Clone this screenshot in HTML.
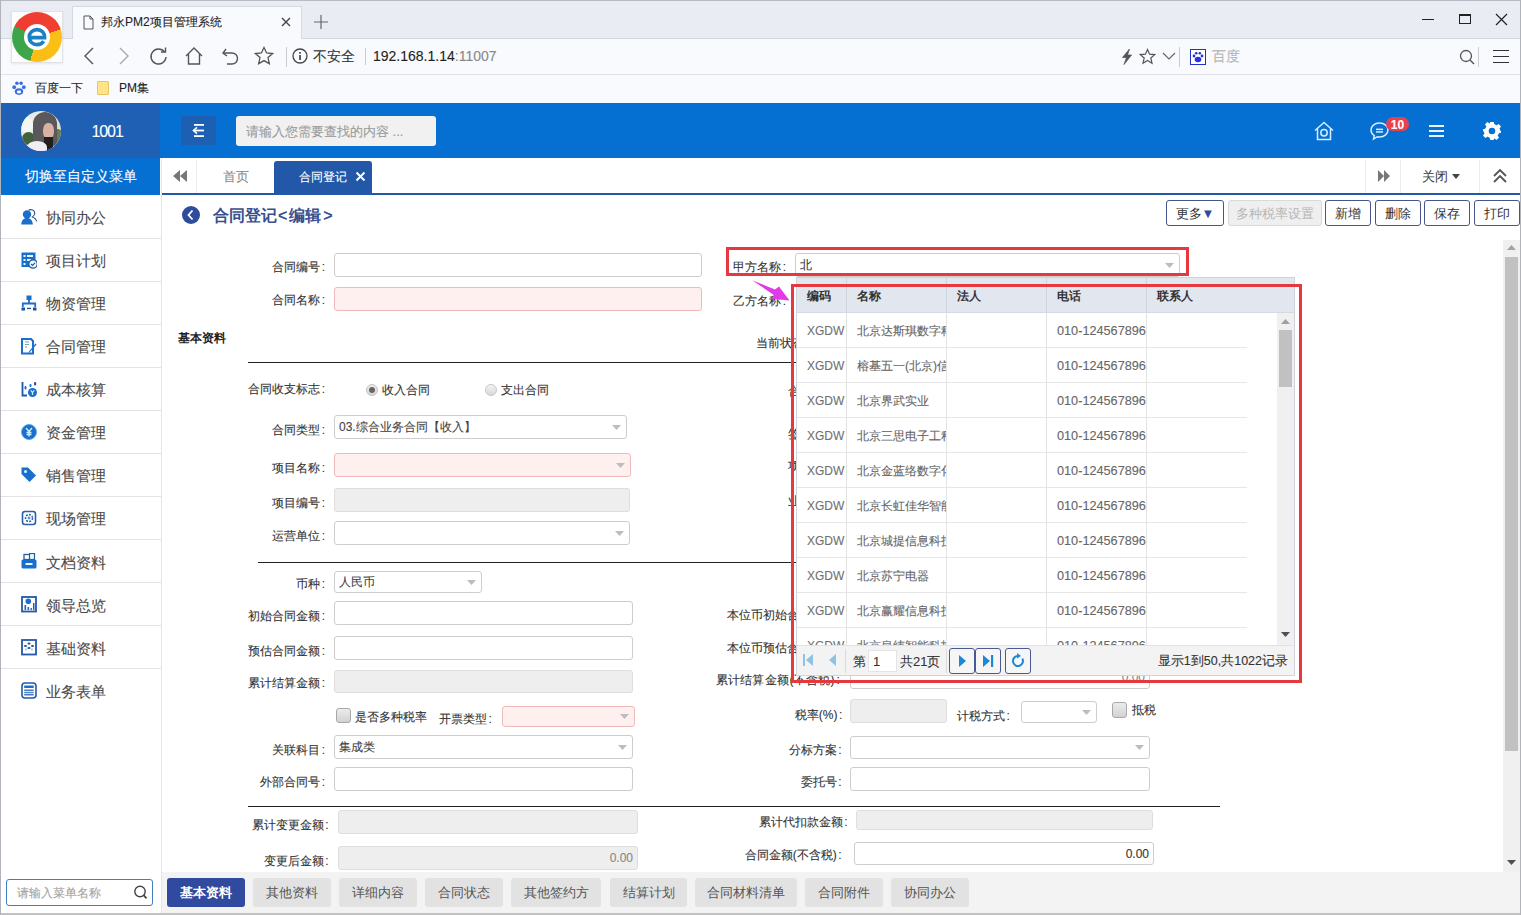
<!DOCTYPE html>
<html><head><meta charset="utf-8">
<style>
*{box-sizing:border-box;margin:0;padding:0}
html,body{width:1521px;height:915px;overflow:hidden;background:#fff;font-family:"Liberation Sans",sans-serif;font-size:12px;color:#333}
.a{position:absolute}
.t{position:absolute;white-space:nowrap;line-height:1;-webkit-text-stroke:0.1px currentColor}
.in{position:absolute;border:1px solid #cdcdcd;border-radius:3px;background:#fff}
.pk{background:#fff0f0;border-color:#f3b9b9}
.gr{background:#eeeeee;border-color:#dedede}
.btn{position:absolute;border:1px solid #46568c;border-radius:3px;background:#fff;font-size:13px;color:#333;text-align:center;line-height:26px}
.tab{position:absolute;top:878px;height:29px;border-radius:3px;background:#e2e2e2;color:#555;font-size:13px;text-align:center;line-height:29px}
</style></head><body>

<div class="a" style="left:0px;top:0px;width:1521px;height:1px;background:#b7bac2"></div>
<div class="a" style="left:1px;top:1px;width:1519px;height:37px;background:#e9ecf3"></div>
<div class="a" style="left:1px;top:38px;width:1519px;height:1px;background:#d3d6dd"></div>
<div class="a" style="left:1px;top:39px;width:1519px;height:35px;background:#f9fafd"></div>
<div class="a" style="left:1px;top:74px;width:1519px;height:1px;background:#e1e3e8"></div>
<div class="a" style="left:1px;top:75px;width:1519px;height:28px;background:#f9fafd"></div>
<div class="a" style="left:72px;top:6px;width:230px;height:33px;background:#f9fafd;border:1px solid #d6d9e0;border-bottom:none"></div>
<div class="a" style="left:11px;top:11px;width:52px;height:52px;background:#fdfdfd;border:1px solid #e2e2e6;box-shadow:0 1px 2px rgba(0,0,0,.08)"></div>
<div class="a" style="left:12px;top:12px;width:50px;height:50px;border-radius:50%;background:conic-gradient(from 0deg,#ef3e31 0deg,#f0412f 72deg,#fbc116 72deg,#f9bd15 196deg,#40a64a 196deg,#3aa448 296deg,#ef3e31 296deg)"></div>
<div class="a" style="left:24px;top:24px;width:26px;height:26px;border-radius:50%;background:#fff"></div>
<svg class="a" style="left:24px;top:24px;" width="26" height="26" viewBox="0 0 26 26"><path d="M5.3 13.6 H20.6 C20.8 8.8 17.6 5.6 13 5.6 C8.6 5.6 5.2 8.9 5.2 13.1 C5.2 17.5 8.6 20.6 13 20.6 C15.8 20.6 18.2 19.4 19.7 17.2" fill="none" stroke="#1b80c6" stroke-width="3.6"/></svg>
<svg class="a" style="left:83px;top:15px;" width="11" height="15" viewBox="0 0 11 15"><path d="M1 1 H7 L10 4 V14 H1 Z M7 1 V4 H10" fill="none" stroke="#555" stroke-width="1"/></svg>
<div class="t" style="left:101px;top:16.4px;font-size:12px;color:#222;">邦永PM2项目管理系统</div>
<svg class="a" style="left:281px;top:17px;" width="10" height="10" viewBox="0 0 10 10"><path d="M1 1 L9 9 M9 1 L1 9" stroke="#444" stroke-width="1.4"/></svg>
<svg class="a" style="left:314px;top:15px;" width="14" height="14" viewBox="0 0 14 14"><path d="M7 0 V14 M0 7 H14" stroke="#666" stroke-width="1.2"/></svg>
<div class="a" style="left:1422px;top:19px;width:12px;height:1px;background:#222"></div>
<div class="a" style="left:1459px;top:14px;width:12px;height:10px;border:1px solid #222;border-top-width:2px"></div>
<svg class="a" style="left:1495px;top:13px;" width="13" height="13" viewBox="0 0 13 13"><path d="M1 1 L12 12 M12 1 L1 12" stroke="#222" stroke-width="1.2"/></svg>
<svg class="a" style="left:82px;top:47px;" width="14" height="18" viewBox="0 0 14 18"><path d="M11 1 L3 9 L11 17" fill="none" stroke="#555" stroke-width="1.4"/></svg>
<svg class="a" style="left:117px;top:47px;" width="14" height="18" viewBox="0 0 14 18"><path d="M3 1 L11 9 L3 17" fill="none" stroke="#aaa" stroke-width="1.4"/></svg>
<svg class="a" style="left:149px;top:46px;" width="20" height="20" viewBox="0 0 20 20"><path d="M15.5 6 A7.5 7.5 0 1 0 17 11" fill="none" stroke="#555" stroke-width="1.4"/><path d="M12 6 H16.5 V1.5" fill="none" stroke="#555" stroke-width="1.4"/></svg>
<svg class="a" style="left:184px;top:46px;" width="20" height="20" viewBox="0 0 20 20"><path d="M2 10 L10 2 L18 10 M4.5 8 V18 H15.5 V8" fill="none" stroke="#555" stroke-width="1.4"/></svg>
<svg class="a" style="left:221px;top:46px;" width="20" height="20" viewBox="0 0 20 20"><path d="M5 3 L2 7 L6 10" fill="none" stroke="#555" stroke-width="1.4"/><path d="M2.5 7 H11 A5.5 5.5 0 0 1 11 18 H6" fill="none" stroke="#555" stroke-width="1.4"/></svg>
<svg class="a" style="left:254px;top:46px;" width="20" height="20" viewBox="0 0 20 20"><path d="M10 1.5 L12.6 7 L18.5 7.6 L14 11.6 L15.3 17.6 L10 14.6 L4.7 17.6 L6 11.6 L1.5 7.6 L7.4 7 Z" fill="none" stroke="#555" stroke-width="1.3"/></svg>
<div class="a" style="left:286px;top:47px;width:1px;height:20px;background:#ccc"></div>
<svg class="a" style="left:292px;top:48px;" width="16" height="16" viewBox="0 0 16 16"><circle cx="8" cy="8" r="7" fill="none" stroke="#444" stroke-width="1.3"/><rect x="7.2" y="7" width="1.7" height="5" fill="#444"/><rect x="7.2" y="4" width="1.7" height="1.7" fill="#444"/></svg>
<div class="t" style="left:313px;top:49.4px;font-size:14px;color:#333;">不安全</div>
<div class="a" style="left:365px;top:48px;width:1px;height:17px;background:#ccc"></div>
<div class="t" style="left:373px;top:49.4px;font-size:14px;color:#222;">192.168.1.14<span style="color:#888">:11007</span></div>
<svg class="a" style="left:1120px;top:48px;" width="14" height="18" viewBox="0 0 14 18"><path d="M9.5 1 L2.5 9.5 H6.5 L4 16.5 L11.5 7 H7.5 L9.5 1 Z" fill="#555" stroke="#555" stroke-width="0.8"/></svg>
<svg class="a" style="left:1139px;top:48px;" width="17" height="17" viewBox="0 0 17 17"><path d="M8.5 1.5 L10.6 6.2 L15.7 6.6 L11.8 10 L13 15.2 L8.5 12.5 L4 15.2 L5.2 10 L1.3 6.6 L6.4 6.2 Z" fill="none" stroke="#555" stroke-width="1.2"/></svg>
<svg class="a" style="left:1162px;top:52px;" width="14" height="9" viewBox="0 0 14 9"><path d="M1 1 L7 7 L13 1" fill="none" stroke="#666" stroke-width="1.2"/></svg>
<div class="a" style="left:1179px;top:47px;width:1px;height:20px;background:#ccc"></div>
<div class="a" style="left:1190px;top:49px;width:16px;height:16px;border:1.5px solid #2431c8;background:#fff"></div>
<svg class="a" style="left:1191px;top:50px;" width="14" height="14" viewBox="0 0 14 14"><ellipse cx="7" cy="9.5" rx="3.3" ry="2.8" fill="#2a32d6"/><circle cx="3" cy="6" r="1.4" fill="#2a32d6"/><circle cx="11" cy="6" r="1.4" fill="#2a32d6"/><circle cx="5.2" cy="3.3" r="1.3" fill="#2a32d6"/><circle cx="8.8" cy="3.3" r="1.3" fill="#2a32d6"/></svg>
<div class="t" style="left:1212px;top:49.4px;font-size:14px;color:#b5b5b5;">百度</div>
<svg class="a" style="left:1459px;top:49px;" width="16" height="16" viewBox="0 0 16 16"><circle cx="7" cy="7" r="5.5" fill="none" stroke="#555" stroke-width="1.3"/><path d="M11 11 L15 15" stroke="#555" stroke-width="1.4"/></svg>
<div class="a" style="left:1478px;top:47px;width:1px;height:20px;background:#ccc"></div>
<div class="a" style="left:1493px;top:50px;width:16px;height:1.2px;background:#333"></div>
<div class="a" style="left:1493px;top:56px;width:16px;height:1.2px;background:#333"></div>
<div class="a" style="left:1493px;top:62px;width:16px;height:1.2px;background:#333"></div>
<svg class="a" style="left:12px;top:81px;" width="14" height="14" viewBox="0 0 14 14"><ellipse cx="7" cy="10.6" rx="4.2" ry="3.3" fill="#3a6fe0"/><ellipse cx="7" cy="11" rx="2.2" ry="1.4" fill="#fff"/><circle cx="2.2" cy="6.2" r="1.9" fill="#3a6fe0"/><circle cx="11.8" cy="6.2" r="1.9" fill="#3a6fe0"/><circle cx="4.9" cy="2.3" r="1.8" fill="#3a6fe0"/><circle cx="9.1" cy="2.3" r="1.8" fill="#3a6fe0"/></svg>
<div class="t" style="left:35px;top:82.4px;font-size:12px;color:#222;">百度一下</div>
<div class="a" style="left:97px;top:81px;width:12px;height:14px;background:#fde38a;border:1px solid #e8c660;border-radius:1px"></div>
<div class="t" style="left:119px;top:82.4px;font-size:12px;color:#222;">PM集</div>
<div class="a" style="left:1px;top:103px;width:1519px;height:55px;background:#066fd2"></div>
<div class="a" style="left:1px;top:103px;width:159px;height:55px;background:#1f60b4"></div>
<div class="a" style="left:21px;top:111px;width:40px;height:40px;border-radius:50%;overflow:hidden;background:#e6ebe4"><div class="a" style="left:0px;top:6px;width:12px;height:16px;background:#f4f6f2;border-radius:50%"></div><div class="a" style="left:1px;top:21px;width:13px;height:13px;background:#42603c;border-radius:50%"></div><div class="a" style="left:29px;top:18px;width:13px;height:17px;background:#617f52;border-radius:40%"></div><div class="a" style="left:31px;top:6px;width:9px;height:12px;background:#d9dccf;border-radius:40%"></div><div class="a" style="left:12px;top:1px;width:24px;height:34px;background:#5a585a;border-radius:12px 12px 5px 8px"></div><div class="a" style="left:22px;top:12px;width:11px;height:16px;background:#d8b3a3;border-radius:45%"></div><div class="a" style="left:23px;top:26px;width:9px;height:13px;background:#221e1f"></div><div class="a" style="left:6px;top:30px;width:20px;height:12px;background:#eeeef3;border-radius:50% 50% 0 0"></div></div>
<div class="t" style="left:91.5px;top:123.5px;font-size:16px;color:#fff;letter-spacing:-1.1px">1001</div>
<div class="a" style="left:181px;top:116px;width:35px;height:29px;background:#1d5fb2"></div>
<svg class="a" style="left:189px;top:122px;" width="20" height="17" viewBox="0 0 20 17"><rect x="5" y="2" width="10" height="1.8" fill="#fff"/><rect x="5" y="7.6" width="10" height="1.8" fill="#fff"/><rect x="5" y="13.2" width="10" height="1.8" fill="#fff"/><path d="M8 5.3 L4.5 8.5 L8 11.7" fill="none" stroke="#fff" stroke-width="1.6"/></svg>
<div class="a" style="left:236px;top:116px;width:200px;height:30px;background:#f1f1f1;border-radius:3px"></div>
<div class="t" style="left:246px;top:124.9px;font-size:13px;color:#9a9a9a;">请输入您需要查找的内容 ...</div>
<svg class="a" style="left:1313px;top:120px;" width="22" height="22" viewBox="0 0 22 22"><path d="M2 10.5 L11 2.5 L20 10.5" fill="none" stroke="#d8ecff" stroke-width="1.5"/><path d="M4.5 8.5 V19.5 H17.5 V8.5" fill="none" stroke="#d8ecff" stroke-width="1.5"/><circle cx="11" cy="12.8" r="3.2" fill="none" stroke="#d8ecff" stroke-width="1.5"/></svg>
<svg class="a" style="left:1369px;top:121px;" width="22" height="20" viewBox="0 0 22 20"><path d="M10.5 2 C5.5 2 2 5.2 2 9 C2 11.5 3.3 13.4 5.3 14.6 L4.5 18 L8.5 15.7 C9.1 15.8 9.8 15.9 10.5 15.9 C15.5 15.9 19 12.7 19 9 C19 5.2 15.5 2 10.5 2 Z" fill="none" stroke="#d8ecff" stroke-width="1.5"/><rect x="7" y="7.6" width="7" height="1.5" fill="#d8ecff"/><rect x="7" y="10.2" width="7" height="1.5" fill="#d8ecff"/></svg>
<div class="a" style="left:1386px;top:117px;width:23px;height:14px;background:#e8414e;border-radius:7px"></div>
<div class="t" style="left:1197.5px;width:400px;text-align:center;top:118.9px;font-size:12px;color:#fff;font-weight:bold">10</div>
<div class="a" style="left:1429px;top:125px;width:15px;height:2px;background:#e9f3ff"></div>
<div class="a" style="left:1429px;top:130px;width:15px;height:2px;background:#e9f3ff"></div>
<div class="a" style="left:1429px;top:135px;width:15px;height:2px;background:#e9f3ff"></div>
<svg class="a" style="left:1482px;top:121px;" width="20" height="20" viewBox="0 0 20 20"><g transform="translate(10 10)" fill="#fff"><path d="M-1.8 -9 H1.8 L2.3 -6.4 L4.4 -5.5 L6.6 -7 L9 -4.6 L7.5 -2.4 L8.4 -0.3 L9 0 V1.8 L6.4 2.3 L5.5 4.4 L7 6.6 L4.6 9 L2.4 7.5 L1.8 7.8 V9 H-1.8 L-2.3 6.4 L-4.4 5.5 L-6.6 7 L-9 4.6 L-7.5 2.4 L-8.4 0.3 L-9 0 V-1.8 L-6.4 -2.3 L-5.5 -4.4 L-7 -6.6 L-4.6 -9 L-2.4 -7.5 Z"/><circle r="7.2"/></g><circle cx="10" cy="10" r="3.3" fill="#066fd2"/></svg>
<div class="a" style="left:1px;top:158px;width:159px;height:37px;background:#066fd2"></div>
<div class="t" style="left:25px;top:169.4px;font-size:14px;color:#fff;">切换至自定义菜单</div>
<div class="a" style="left:1px;top:195px;width:159px;height:677px;background:#fff"></div>
<div class="a" style="left:161px;top:158px;width:1px;height:755px;background:#e4e4e4"></div>
<div class="a" style="left:1px;top:238px;width:160px;height:1px;background:#e3e3e3"></div>
<svg class="a" style="left:21px;top:209px;" width="16" height="17" viewBox="0 0 16 17"><circle cx="6" cy="5.4" r="4.2" fill="#1b6fcc"/><path d="M0.3 15.6 C0.3 11.4 2.6 8.9 6 8.9 C9.4 8.9 11.8 11.4 11.8 15.6 Z" fill="#1b6fcc"/><path d="M7.6 1.2 C10 0 13.8 1 13.8 4.2 C13.8 6 12.6 7.1 11.4 7.9 C13.2 8.6 15.3 9.8 15.6 12.4" fill="none" stroke="#2c4f8c" stroke-width="1.1"/></svg>
<div class="t" style="left:46px;top:210.4px;font-size:15px;color:#4a4a4a;">协同办公</div>
<div class="a" style="left:1px;top:281px;width:160px;height:1px;background:#e3e3e3"></div>
<svg class="a" style="left:21px;top:252px;" width="16" height="17" viewBox="0 0 16 17"><rect x="0.5" y="0.5" width="14" height="14.5" fill="#1b6fcc"/><rect x="2.5" y="3" width="2" height="2" fill="#dff"/><rect x="6" y="3" width="6" height="2" fill="#dff"/><rect x="2.5" y="7" width="2" height="2" fill="#dff"/><rect x="6" y="7" width="4" height="2" fill="#dff"/><rect x="2.5" y="11" width="2" height="2" fill="#dff"/><circle cx="12" cy="12" r="4.2" fill="#eaffff" stroke="#2d5596" stroke-width="1.2"/><path d="M10 12 L11.6 13.4 L14 10.8" fill="none" stroke="#2d5596" stroke-width="1.2"/></svg>
<div class="t" style="left:46px;top:253.4px;font-size:15px;color:#4a4a4a;">项目计划</div>
<div class="a" style="left:1px;top:324px;width:160px;height:1px;background:#e3e3e3"></div>
<svg class="a" style="left:21px;top:295px;" width="16" height="17" viewBox="0 0 16 17"><rect x="5.5" y="0.5" width="5" height="4.5" fill="#1b6fcc"/><path d="M8 5 V9 M1.8 12 V8.5 H14.2 V12" fill="none" stroke="#1b6fcc" stroke-width="1.8"/><rect x="0.5" y="12.5" width="3.5" height="3" fill="#1d4f9a"/><rect x="6" y="12.8" width="4" height="1.3" fill="#1d4f9a"/><rect x="12" y="12.5" width="3.5" height="3" fill="#1d4f9a"/></svg>
<div class="t" style="left:46px;top:296.4px;font-size:15px;color:#4a4a4a;">物资管理</div>
<div class="a" style="left:1px;top:367px;width:160px;height:1px;background:#e3e3e3"></div>
<svg class="a" style="left:21px;top:338px;" width="16" height="17" viewBox="0 0 16 17"><path d="M1 1 H10 L12 3 V15.5 H1 Z" fill="none" stroke="#1b6fcc" stroke-width="2"/><path d="M4 4 H8 M4 6.5 H8 M4 9 H6" stroke="#7aa" stroke-width="1"/><path d="M14.5 5.5 L8 13.5 L7 15 L9 14 L15.5 6.5 Z" fill="#1b6fcc"/></svg>
<div class="t" style="left:46px;top:339.4px;font-size:15px;color:#4a4a4a;">合同管理</div>
<div class="a" style="left:1px;top:410px;width:160px;height:1px;background:#e3e3e3"></div>
<svg class="a" style="left:21px;top:381px;" width="16" height="17" viewBox="0 0 16 17"><path d="M1.5 1 V14.5 H6" fill="none" stroke="#1e56a8" stroke-width="1.8"/><rect x="3.5" y="5" width="2" height="3.5" rx="1" fill="#1b6fcc"/><rect x="8.5" y="3" width="2" height="3" rx="1" fill="#1b6fcc"/><rect x="13" y="1" width="2.2" height="3.5" rx="1" fill="#2856a0"/><circle cx="11.5" cy="11.5" r="4.5" fill="#1b6fcc"/><path d="M9.8 9.3 L11.5 11.5 L13.2 9.3 M11.5 11.5 V14" fill="none" stroke="#cef" stroke-width="1.2"/></svg>
<div class="t" style="left:46px;top:382.4px;font-size:15px;color:#4a4a4a;">成本核算</div>
<div class="a" style="left:1px;top:453px;width:160px;height:1px;background:#e3e3e3"></div>
<svg class="a" style="left:21px;top:424px;" width="16" height="17" viewBox="0 0 16 17"><circle cx="8" cy="8" r="7.5" fill="#1b6fcc" stroke="#5aa8ee" stroke-width="1"/><path d="M5 4 L8 7.5 L11 4 M8 7.5 V12.5 M5.5 8.5 H10.5 M5.5 10.5 H10.5" fill="none" stroke="#c8f0ff" stroke-width="1.4"/></svg>
<div class="t" style="left:46px;top:425.4px;font-size:15px;color:#4a4a4a;">资金管理</div>
<div class="a" style="left:1px;top:496px;width:160px;height:1px;background:#e3e3e3"></div>
<svg class="a" style="left:21px;top:467px;" width="16" height="17" viewBox="0 0 16 17"><path d="M0.5 0.5 H7 L15 8.5 L8.5 15 L0.5 7 Z" fill="#1b6fcc"/><circle cx="4.5" cy="4.5" r="1.5" fill="#cff"/></svg>
<div class="t" style="left:46px;top:468.4px;font-size:15px;color:#4a4a4a;">销售管理</div>
<div class="a" style="left:1px;top:539px;width:160px;height:1px;background:#e3e3e3"></div>
<svg class="a" style="left:21px;top:510px;" width="16" height="17" viewBox="0 0 16 17"><rect x="1.5" y="1.5" width="13" height="13" rx="2.5" fill="none" stroke="#2b5fa8" stroke-width="1.6"/><circle cx="8" cy="8" r="3.5" fill="none" stroke="#2b5fa8" stroke-width="1.5" stroke-dasharray="2 1.2"/><circle cx="8" cy="8" r="1.4" fill="#4a90e2"/></svg>
<div class="t" style="left:46px;top:511.4px;font-size:15px;color:#4a4a4a;">现场管理</div>
<div class="a" style="left:1px;top:582px;width:160px;height:1px;background:#e3e3e3"></div>
<svg class="a" style="left:21px;top:553px;" width="16" height="17" viewBox="0 0 16 17"><rect x="3" y="1.5" width="6" height="5" fill="none" stroke="#2a5aa0" stroke-width="1.3"/><rect x="8.5" y="0.5" width="5" height="6" fill="#dff" stroke="#2a5aa0" stroke-width="1.2"/><rect x="0.5" y="6.5" width="15" height="9" rx="1.5" fill="#1b6fcc"/><rect x="4.5" y="10" width="7" height="2" fill="#dff"/></svg>
<div class="t" style="left:46px;top:554.5px;font-size:15px;color:#4a4a4a;">文档资料</div>
<div class="a" style="left:1px;top:625px;width:160px;height:1px;background:#e3e3e3"></div>
<svg class="a" style="left:21px;top:596px;" width="16" height="17" viewBox="0 0 16 17"><rect x="1" y="1" width="14" height="14.5" fill="none" stroke="#2358a8" stroke-width="1.8"/><circle cx="7.3" cy="5.2" r="2.8" fill="#1b6fcc"/><rect x="3.5" y="9" width="1.6" height="5" fill="#2860ab"/><rect x="6.5" y="11" width="1.6" height="3" fill="#2860ab"/><rect x="9.5" y="12" width="1.4" height="2" fill="#2860ab"/><rect x="12" y="7" width="1.5" height="7" fill="#2860ab"/></svg>
<div class="t" style="left:46px;top:597.5px;font-size:15px;color:#4a4a4a;">领导总览</div>
<div class="a" style="left:1px;top:668px;width:160px;height:1px;background:#e3e3e3"></div>
<svg class="a" style="left:21px;top:639px;" width="16" height="17" viewBox="0 0 16 17"><rect x="1" y="1" width="14" height="14.5" fill="none" stroke="#2358a8" stroke-width="1.8"/><ellipse cx="8" cy="4.6" rx="1.6" ry="1.1" fill="#1f55a0"/><ellipse cx="4.5" cy="7" rx="1.6" ry="1.1" fill="#1f55a0"/><ellipse cx="11.5" cy="7" rx="1.6" ry="1.1" fill="#1f55a0"/><ellipse cx="8" cy="9" rx="1.6" ry="1.1" fill="#1f55a0"/><path d="M5 9.5 V11.5 M11 9.5 V11.5" stroke="#6a9ad0" stroke-width="1"/></svg>
<div class="t" style="left:46px;top:640.5px;font-size:15px;color:#4a4a4a;">基础资料</div>
<svg class="a" style="left:21px;top:682px;" width="16" height="17" viewBox="0 0 16 17"><rect x="1" y="1" width="14" height="15" rx="3" fill="none" stroke="#2358a8" stroke-width="1.6"/><rect x="3.2" y="3.5" width="9.5" height="2.5" fill="#1b6fcc"/><rect x="3.2" y="7.6" width="9.5" height="1.2" fill="#2358a8"/><rect x="3.2" y="9.8" width="9.5" height="1.5" fill="#4a85cf"/><rect x="3.2" y="12.2" width="9.5" height="1.2" fill="#2358a8"/></svg>
<div class="t" style="left:46px;top:683.5px;font-size:15px;color:#4a4a4a;">业务表单</div>
<div class="a" style="left:6px;top:879px;width:147px;height:27px;border:1px solid #3f7fc0;border-radius:3px;background:#fff"></div>
<div class="t" style="left:17px;top:886.9px;font-size:12px;color:#a3a3a3;">请输入菜单名称</div>
<svg class="a" style="left:133px;top:884px;" width="16" height="17" viewBox="0 0 16 17"><circle cx="7" cy="7.5" r="5.2" fill="none" stroke="#444" stroke-width="1.4"/><path d="M10.6 11.2 L13.5 14.3" stroke="#444" stroke-width="1.8"/></svg>
<div class="a" style="left:1px;top:913px;width:1520px;height:2px;background:#c2c2c2"></div>
<div class="a" style="left:162px;top:158px;width:1358px;height:35px;background:#fff"></div>
<svg class="a" style="left:172px;top:169px;" width="16" height="14" viewBox="0 0 16 14"><path d="M8 1 L1 7 L8 13 Z M15 1 L8 7 L15 13 Z" fill="#777"/></svg>
<div class="a" style="left:196px;top:160px;width:1px;height:33px;background:#ececec"></div>
<div class="t" style="left:223px;top:171.1px;font-size:12.5px;color:#8a8a8a;">首页</div>
<div class="a" style="left:274px;top:161px;width:98px;height:33px;background:#2358a8;border-radius:3px 3px 0 0"></div>
<div class="t" style="left:299px;top:171.4px;font-size:12px;color:#fff;">合同登记</div>
<svg class="a" style="left:355px;top:171px;" width="11" height="11" viewBox="0 0 11 11"><path d="M1.5 1.5 L9.5 9.5 M9.5 1.5 L1.5 9.5" stroke="#fff" stroke-width="1.9"/></svg>
<div class="a" style="left:1365px;top:160px;width:1px;height:33px;background:#ececec"></div>
<svg class="a" style="left:1377px;top:169px;" width="13" height="14" viewBox="0 0 13 14"><path d="M1 1 L7 7 L1 13 Z M7 1 L13 7 L7 13 Z" fill="#777"/></svg>
<div class="a" style="left:1400px;top:160px;width:1px;height:33px;background:#ececec"></div>
<div class="t" style="left:1422px;top:169.9px;font-size:13px;color:#444;">关闭</div>
<svg class="a" style="left:1452px;top:174px;" width="8" height="5" viewBox="0 0 8 5"><path d="M0 0 H8 L4 5 Z" fill="#444"/></svg>
<div class="a" style="left:1479px;top:160px;width:1px;height:33px;background:#ececec"></div>
<svg class="a" style="left:1492px;top:168px;" width="16" height="16" viewBox="0 0 16 16"><path d="M2 8 L8 2 L14 8 M2 14 L8 8 L14 14" fill="none" stroke="#555" stroke-width="1.8"/></svg>
<div class="a" style="left:162px;top:193px;width:1358px;height:2px;background:#2358a8"></div>
<div class="a" style="left:182px;top:206px;width:18px;height:18px;border-radius:50%;background:#2f4c9c"></div>
<svg class="a" style="left:182px;top:206px;" width="18" height="18" viewBox="0 0 18 18"><path d="M10.5 4.5 L6.5 9 L10.5 13.5" fill="none" stroke="#fff" stroke-width="1.8"/></svg>
<div class="t" style="left:213px;top:207.5px;font-size:16px;color:#38508f;font-weight:bold;-webkit-text-stroke:0">合同登记<span style="margin:0 2px 0 1px">&lt;</span>编辑<span style="margin-left:2px">&gt;</span></div>
<div class="btn" style="left:1166px;top:200px;width:58px;height:26px;">更多<span style="color:#2f4c9c">▼</span></div>
<div class="btn" style="left:1228px;top:200px;width:94px;height:26px;border-color:#d9d9d9;background:#efefef;color:#b5b5b5">多种税率设置</div>
<div class="btn" style="left:1325px;top:200px;width:46px;height:26px;">新增</div>
<div class="btn" style="left:1375px;top:200px;width:46px;height:26px;">删除</div>
<div class="btn" style="left:1424px;top:200px;width:46px;height:26px;">保存</div>
<div class="btn" style="left:1474px;top:200px;width:46px;height:26px;">打印</div>
<div class="t" style="right:1196.0px;top:261.4px;font-size:12px;color:#333;">合同编号<span style="margin-left:1.5px">:</span></div>
<div class="in " style="left:334px;top:253px;width:368px;height:24px"></div>
<div class="t" style="right:1196.0px;top:294.4px;font-size:12px;color:#333;">合同名称<span style="margin-left:1.5px">:</span></div>
<div class="in pk" style="left:334px;top:287px;width:368px;height:24px"></div>
<div class="t" style="left:178px;top:332.4px;font-size:12px;color:#222;font-weight:bold;-webkit-text-stroke:0">基本资料</div>
<div class="a" style="left:248px;top:362px;width:560px;height:1px;background:#222"></div>
<div class="t" style="right:1196.0px;top:383.4px;font-size:12px;color:#333;">合同收支标志<span style="margin-left:1.5px">:</span></div>
<div class="a" style="left:366px;top:384px;width:12px;height:12px;border-radius:50%;border:1.5px solid #c2c2c2;background:linear-gradient(#eeeeee,#d8d8d8)"></div>
<div class="a" style="left:369px;top:387px;width:6px;height:6px;border-radius:50%;background:#666"></div>
<div class="t" style="left:382px;top:384.4px;font-size:12px;color:#333;">收入合同</div>
<div class="a" style="left:485px;top:384px;width:12px;height:12px;border-radius:50%;border:1.5px solid #c6c6c6;background:linear-gradient(#f2f2f2,#d9d9d9)"></div>
<div class="t" style="left:501px;top:384.4px;font-size:12px;color:#333;">支出合同</div>
<div class="t" style="right:1196.0px;top:424.4px;font-size:12px;color:#333;">合同类型<span style="margin-left:1.5px">:</span></div>
<div class="in " style="left:334px;top:415px;width:293px;height:24px"></div>
<div class="t" style="left:339px;top:421.4px;font-size:12px;color:#444;">03.综合业务合同【收入】</div>
<svg class="a" style="left:612px;top:425px;" width="9" height="5" viewBox="0 0 9 5"><path d="M0 0 H9 L4.5 5 Z" fill="#bdbdbd"/></svg>
<div class="t" style="right:1196.0px;top:462.4px;font-size:12px;color:#333;">项目名称<span style="margin-left:1.5px">:</span></div>
<div class="in pk" style="left:334px;top:453px;width:297px;height:24px"></div>
<svg class="a" style="left:616px;top:463px;" width="9" height="5" viewBox="0 0 9 5"><path d="M0 0 H9 L4.5 5 Z" fill="#bdbdbd"/></svg>
<div class="t" style="right:1196.0px;top:497.4px;font-size:12px;color:#333;">项目编号<span style="margin-left:1.5px">:</span></div>
<div class="in gr" style="left:334px;top:488px;width:296px;height:24px"></div>
<div class="t" style="right:1196.0px;top:530.4px;font-size:12px;color:#333;">运营单位<span style="margin-left:1.5px">:</span></div>
<div class="in " style="left:334px;top:521px;width:296px;height:24px"></div>
<svg class="a" style="left:615px;top:531px;" width="9" height="5" viewBox="0 0 9 5"><path d="M0 0 H9 L4.5 5 Z" fill="#bdbdbd"/></svg>
<div class="a" style="left:258px;top:562px;width:540px;height:1px;background:#222"></div>
<div class="t" style="right:1196.0px;top:578.4px;font-size:12px;color:#333;">币种<span style="margin-left:1.5px">:</span></div>
<div class="in " style="left:334px;top:571px;width:148px;height:22px"></div>
<div class="t" style="left:339px;top:576.4px;font-size:12px;color:#444;">人民币</div>
<svg class="a" style="left:467px;top:580px;" width="9" height="5" viewBox="0 0 9 5"><path d="M0 0 H9 L4.5 5 Z" fill="#bdbdbd"/></svg>
<div class="t" style="right:1196.0px;top:610.4px;font-size:12px;color:#333;">初始合同金额<span style="margin-left:1.5px">:</span></div>
<div class="in " style="left:334px;top:601px;width:299px;height:24px"></div>
<div class="t" style="right:1196.0px;top:645.4px;font-size:12px;color:#333;">预估合同金额<span style="margin-left:1.5px">:</span></div>
<div class="in " style="left:334px;top:636px;width:299px;height:24px"></div>
<div class="t" style="right:1196.0px;top:677.4px;font-size:12px;color:#333;">累计结算金额<span style="margin-left:1.5px">:</span></div>
<div class="in gr" style="left:334px;top:670px;width:299px;height:23px"></div>
<div class="a" style="left:336px;top:708px;width:15px;height:15px;border-radius:3px;border:1px solid #a8a8a8;background:linear-gradient(#ececec,#d2d2d2)"></div>
<div class="t" style="left:355px;top:710.9px;font-size:12px;color:#333;">是否多种税率</div>
<div class="t" style="left:439px;top:712.9px;font-size:12px;color:#333;">开票类型<span style="margin-left:1.5px">:</span></div>
<div class="in pk" style="left:502px;top:706px;width:133px;height:21px"></div>
<svg class="a" style="left:620px;top:714px;" width="9" height="5" viewBox="0 0 9 5"><path d="M0 0 H9 L4.5 5 Z" fill="#bdbdbd"/></svg>
<div class="t" style="right:1196.0px;top:743.9px;font-size:12px;color:#333;">关联科目<span style="margin-left:1.5px">:</span></div>
<div class="in " style="left:334px;top:735px;width:299px;height:24px"></div>
<div class="t" style="left:339px;top:741.4px;font-size:12px;color:#444;">集成类</div>
<svg class="a" style="left:618px;top:745px;" width="9" height="5" viewBox="0 0 9 5"><path d="M0 0 H9 L4.5 5 Z" fill="#bdbdbd"/></svg>
<div class="t" style="right:1196.0px;top:775.9px;font-size:12px;color:#333;">外部合同号<span style="margin-left:1.5px">:</span></div>
<div class="in " style="left:334px;top:767px;width:299px;height:24px"></div>
<div class="a" style="left:248px;top:806px;width:972px;height:1px;background:#222"></div>
<div class="t" style="right:1192.5px;top:818.9px;font-size:12px;color:#333;">累计变更金额<span style="margin-left:1.5px">:</span></div>
<div class="in gr" style="left:338px;top:810px;width:300px;height:24px"></div>
<div class="t" style="right:1192.5px;top:854.9px;font-size:12px;color:#333;">变更后金额<span style="margin-left:1.5px">:</span></div>
<div class="in gr" style="left:338px;top:846px;width:300px;height:24px"></div>
<div class="t" style="right:888px;top:852.4px;font-size:12px;color:#888;">0.00</div>
<div class="t" style="right:734.8px;top:261.4px;font-size:12px;color:#333;">甲方名称<span style="margin-left:1.5px">:</span></div>
<div class="in " style="left:795px;top:253px;width:385px;height:24px"></div>
<div class="t" style="left:800px;top:259.4px;font-size:12px;color:#333;">北</div>
<svg class="a" style="left:1165px;top:263px;" width="9" height="5" viewBox="0 0 9 5"><path d="M0 0 H9 L4.5 5 Z" fill="#bdbdbd"/></svg>
<div class="t" style="right:734.8px;top:295.4px;font-size:12px;color:#333;">乙方名称<span style="margin-left:1.5px">:</span></div>
<div class="t" style="left:756px;top:337.4px;font-size:12px;color:#333;">当前状态<span style="margin-left:1.5px">:</span></div>
<div class="t" style="left:788px;top:385.4px;font-size:12px;color:#333;">合同</div>
<div class="t" style="left:788px;top:428.4px;font-size:12px;color:#333;">签订</div>
<div class="t" style="left:788px;top:460.4px;font-size:12px;color:#333;">项目</div>
<div class="t" style="left:788px;top:495.4px;font-size:12px;color:#333;">业务</div>
<div class="t" style="left:727px;top:609.2px;font-size:12px;color:#333;">本位币初始合同金额</div>
<div class="in " style="left:850px;top:601px;width:300px;height:24px"></div>
<div class="t" style="left:727px;top:642.2px;font-size:12px;color:#333;">本位币预估合同金额</div>
<div class="in " style="left:850px;top:636px;width:300px;height:24px"></div>
<div class="t" style="left:715.6px;top:674.2px;font-size:12px;color:#333;letter-spacing:0.3px">累计结算金额(不含税)<span style="margin-left:1.5px">:</span></div>
<div class="in " style="left:850px;top:665px;width:300px;height:24px"></div>
<div class="t" style="right:376px;top:671.4px;font-size:12px;color:#888;">0.00</div>
<div class="t" style="right:678.7px;top:708.9px;font-size:12px;color:#333;">税率(%)<span style="margin-left:1.5px">:</span></div>
<div class="in gr" style="left:850px;top:699px;width:97px;height:24px"></div>
<div class="t" style="left:957px;top:709.9px;font-size:12px;color:#333;">计税方式<span style="margin-left:1.5px">:</span></div>
<div class="in " style="left:1021px;top:701px;width:76px;height:22px"></div>
<svg class="a" style="left:1082px;top:710px;" width="9" height="5" viewBox="0 0 9 5"><path d="M0 0 H9 L4.5 5 Z" fill="#bdbdbd"/></svg>
<div class="a" style="left:1112px;top:702px;width:15px;height:16px;border-radius:3px;border:1px solid #a8a8a8;background:linear-gradient(#ececec,#d2d2d2)"></div>
<div class="t" style="left:1132px;top:704.4px;font-size:12px;color:#333;">抵税</div>
<div class="t" style="right:679.5px;top:744.4px;font-size:12px;color:#333;">分标方案<span style="margin-left:1.5px">:</span></div>
<div class="in " style="left:850px;top:736px;width:300px;height:23px"></div>
<svg class="a" style="left:1135px;top:745px;" width="9" height="5" viewBox="0 0 9 5"><path d="M0 0 H9 L4.5 5 Z" fill="#bdbdbd"/></svg>
<div class="t" style="right:679.5px;top:776.4px;font-size:12px;color:#333;">委托号<span style="margin-left:1.5px">:</span></div>
<div class="in " style="left:850px;top:767px;width:300px;height:24px"></div>
<div class="t" style="right:673.5px;top:816.4px;font-size:12px;color:#333;">累计代扣款金额<span style="margin-left:1.5px">:</span></div>
<div class="in gr" style="left:856px;top:810px;width:297px;height:20px"></div>
<div class="t" style="right:679.5px;top:849.4px;font-size:12px;color:#333;">合同金额(不含税)<span style="margin-left:1.5px">:</span></div>
<div class="in " style="left:854px;top:842px;width:300px;height:23px"></div>
<div class="t" style="right:372px;top:847.9px;font-size:12px;color:#333;">0.00</div>
<div class="a" style="left:1503px;top:240px;width:17px;height:632px;background:#f0f0f0"></div>
<svg class="a" style="left:1507px;top:245px;" width="9" height="5" viewBox="0 0 9 5"><path d="M0 5 H9 L4.5 0 Z" fill="#a3a3a3"/></svg>
<div class="a" style="left:1505px;top:257px;width:13px;height:494px;background:#c1c1c1"></div>
<svg class="a" style="left:1507px;top:860px;" width="9" height="5" viewBox="0 0 9 5"><path d="M0 0 H9 L4.5 5 Z" fill="#505050"/></svg>
<div class="a" style="left:796px;top:277px;width:499px;height:399px;background:#fff;border:1px solid #cfd3da"></div>
<div class="a" style="left:797px;top:278px;width:497px;height:34px;background:#e2e6ef"></div>
<div class="a" style="left:797px;top:312px;width:497px;height:1px;background:#d5d9e2"></div>
<div class="a" style="left:846px;top:278px;width:1px;height:34px;background:#cfd3dc"></div>
<div class="a" style="left:946px;top:278px;width:1px;height:34px;background:#cfd3dc"></div>
<div class="a" style="left:1046px;top:278px;width:1px;height:34px;background:#cfd3dc"></div>
<div class="a" style="left:1146px;top:278px;width:1px;height:34px;background:#cfd3dc"></div>
<div class="t" style="left:807px;top:290.4px;font-size:12px;color:#333;font-weight:bold;-webkit-text-stroke:0">编码</div>
<div class="t" style="left:857px;top:290.4px;font-size:12px;color:#333;font-weight:bold;-webkit-text-stroke:0">名称</div>
<div class="t" style="left:957px;top:290.4px;font-size:12px;color:#333;font-weight:bold;-webkit-text-stroke:0">法人</div>
<div class="t" style="left:1057px;top:290.4px;font-size:12px;color:#333;font-weight:bold;-webkit-text-stroke:0">电话</div>
<div class="t" style="left:1157px;top:290.4px;font-size:12px;color:#333;font-weight:bold;-webkit-text-stroke:0">联系人</div>
<div class="a" style="left:797px;top:313px;width:480px;height:332px;overflow:hidden">
<div class="a" style="left:0;top:34px;width:450px;height:1px;background:#e6e6e6"></div>
<div class="a" style="left:49px;top:0px;width:1px;height:35px;background:#e3e3e3"></div>
<div class="a" style="left:149px;top:0px;width:1px;height:35px;background:#e3e3e3"></div>
<div class="a" style="left:249px;top:0px;width:1px;height:35px;background:#e3e3e3"></div>
<div class="a" style="left:349px;top:0px;width:1px;height:35px;background:#e3e3e3"></div>
<div class="t" style="left:10px;top:11.9px;font-size:12px;color:#707070">XGDW</div>
<div class="a" style="left:60px;top:0px;width:89px;height:35px;overflow:hidden"><div class="t" style="left:0;top:11.9px;font-size:12px;color:#666">北京达斯琪数字科技</div></div>
<div class="t" style="left:260px;top:12.4px;font-size:12.7px;color:#666">010-124567896</div>
<div class="a" style="left:0;top:69px;width:450px;height:1px;background:#e6e6e6"></div>
<div class="a" style="left:49px;top:35px;width:1px;height:35px;background:#e3e3e3"></div>
<div class="a" style="left:149px;top:35px;width:1px;height:35px;background:#e3e3e3"></div>
<div class="a" style="left:249px;top:35px;width:1px;height:35px;background:#e3e3e3"></div>
<div class="a" style="left:349px;top:35px;width:1px;height:35px;background:#e3e3e3"></div>
<div class="t" style="left:10px;top:46.9px;font-size:12px;color:#707070">XGDW</div>
<div class="a" style="left:60px;top:35px;width:89px;height:35px;overflow:hidden"><div class="t" style="left:0;top:11.9px;font-size:12px;color:#666">榕基五一(北京)信息</div></div>
<div class="t" style="left:260px;top:47.4px;font-size:12.7px;color:#666">010-124567896</div>
<div class="a" style="left:0;top:104px;width:450px;height:1px;background:#e6e6e6"></div>
<div class="a" style="left:49px;top:70px;width:1px;height:35px;background:#e3e3e3"></div>
<div class="a" style="left:149px;top:70px;width:1px;height:35px;background:#e3e3e3"></div>
<div class="a" style="left:249px;top:70px;width:1px;height:35px;background:#e3e3e3"></div>
<div class="a" style="left:349px;top:70px;width:1px;height:35px;background:#e3e3e3"></div>
<div class="t" style="left:10px;top:81.9px;font-size:12px;color:#707070">XGDW</div>
<div class="a" style="left:60px;top:70px;width:89px;height:35px;overflow:hidden"><div class="t" style="left:0;top:11.9px;font-size:12px;color:#666">北京界武实业</div></div>
<div class="t" style="left:260px;top:82.4px;font-size:12.7px;color:#666">010-124567896</div>
<div class="a" style="left:0;top:139px;width:450px;height:1px;background:#e6e6e6"></div>
<div class="a" style="left:49px;top:105px;width:1px;height:35px;background:#e3e3e3"></div>
<div class="a" style="left:149px;top:105px;width:1px;height:35px;background:#e3e3e3"></div>
<div class="a" style="left:249px;top:105px;width:1px;height:35px;background:#e3e3e3"></div>
<div class="a" style="left:349px;top:105px;width:1px;height:35px;background:#e3e3e3"></div>
<div class="t" style="left:10px;top:116.9px;font-size:12px;color:#707070">XGDW</div>
<div class="a" style="left:60px;top:105px;width:89px;height:35px;overflow:hidden"><div class="t" style="left:0;top:11.9px;font-size:12px;color:#666">北京三思电子工程</div></div>
<div class="t" style="left:260px;top:117.4px;font-size:12.7px;color:#666">010-124567896</div>
<div class="a" style="left:0;top:174px;width:450px;height:1px;background:#e6e6e6"></div>
<div class="a" style="left:49px;top:140px;width:1px;height:35px;background:#e3e3e3"></div>
<div class="a" style="left:149px;top:140px;width:1px;height:35px;background:#e3e3e3"></div>
<div class="a" style="left:249px;top:140px;width:1px;height:35px;background:#e3e3e3"></div>
<div class="a" style="left:349px;top:140px;width:1px;height:35px;background:#e3e3e3"></div>
<div class="t" style="left:10px;top:151.9px;font-size:12px;color:#707070">XGDW</div>
<div class="a" style="left:60px;top:140px;width:89px;height:35px;overflow:hidden"><div class="t" style="left:0;top:11.9px;font-size:12px;color:#666">北京金蓝络数字化</div></div>
<div class="t" style="left:260px;top:152.4px;font-size:12.7px;color:#666">010-124567896</div>
<div class="a" style="left:0;top:209px;width:450px;height:1px;background:#e6e6e6"></div>
<div class="a" style="left:49px;top:175px;width:1px;height:35px;background:#e3e3e3"></div>
<div class="a" style="left:149px;top:175px;width:1px;height:35px;background:#e3e3e3"></div>
<div class="a" style="left:249px;top:175px;width:1px;height:35px;background:#e3e3e3"></div>
<div class="a" style="left:349px;top:175px;width:1px;height:35px;background:#e3e3e3"></div>
<div class="t" style="left:10px;top:186.9px;font-size:12px;color:#707070">XGDW</div>
<div class="a" style="left:60px;top:175px;width:89px;height:35px;overflow:hidden"><div class="t" style="left:0;top:11.9px;font-size:12px;color:#666">北京长虹佳华智能</div></div>
<div class="t" style="left:260px;top:187.4px;font-size:12.7px;color:#666">010-124567896</div>
<div class="a" style="left:0;top:244px;width:450px;height:1px;background:#e6e6e6"></div>
<div class="a" style="left:49px;top:210px;width:1px;height:35px;background:#e3e3e3"></div>
<div class="a" style="left:149px;top:210px;width:1px;height:35px;background:#e3e3e3"></div>
<div class="a" style="left:249px;top:210px;width:1px;height:35px;background:#e3e3e3"></div>
<div class="a" style="left:349px;top:210px;width:1px;height:35px;background:#e3e3e3"></div>
<div class="t" style="left:10px;top:221.9px;font-size:12px;color:#707070">XGDW</div>
<div class="a" style="left:60px;top:210px;width:89px;height:35px;overflow:hidden"><div class="t" style="left:0;top:11.9px;font-size:12px;color:#666">北京城提信息科技</div></div>
<div class="t" style="left:260px;top:222.4px;font-size:12.7px;color:#666">010-124567896</div>
<div class="a" style="left:0;top:279px;width:450px;height:1px;background:#e6e6e6"></div>
<div class="a" style="left:49px;top:245px;width:1px;height:35px;background:#e3e3e3"></div>
<div class="a" style="left:149px;top:245px;width:1px;height:35px;background:#e3e3e3"></div>
<div class="a" style="left:249px;top:245px;width:1px;height:35px;background:#e3e3e3"></div>
<div class="a" style="left:349px;top:245px;width:1px;height:35px;background:#e3e3e3"></div>
<div class="t" style="left:10px;top:256.9px;font-size:12px;color:#707070">XGDW</div>
<div class="a" style="left:60px;top:245px;width:89px;height:35px;overflow:hidden"><div class="t" style="left:0;top:11.9px;font-size:12px;color:#666">北京苏宁电器</div></div>
<div class="t" style="left:260px;top:257.4px;font-size:12.7px;color:#666">010-124567896</div>
<div class="a" style="left:0;top:314px;width:450px;height:1px;background:#e6e6e6"></div>
<div class="a" style="left:49px;top:280px;width:1px;height:35px;background:#e3e3e3"></div>
<div class="a" style="left:149px;top:280px;width:1px;height:35px;background:#e3e3e3"></div>
<div class="a" style="left:249px;top:280px;width:1px;height:35px;background:#e3e3e3"></div>
<div class="a" style="left:349px;top:280px;width:1px;height:35px;background:#e3e3e3"></div>
<div class="t" style="left:10px;top:291.9px;font-size:12px;color:#707070">XGDW</div>
<div class="a" style="left:60px;top:280px;width:89px;height:35px;overflow:hidden"><div class="t" style="left:0;top:11.9px;font-size:12px;color:#666">北京赢耀信息科技</div></div>
<div class="t" style="left:260px;top:292.4px;font-size:12.7px;color:#666">010-124567896</div>
<div class="a" style="left:0;top:349px;width:450px;height:1px;background:#e6e6e6"></div>
<div class="a" style="left:49px;top:315px;width:1px;height:35px;background:#e3e3e3"></div>
<div class="a" style="left:149px;top:315px;width:1px;height:35px;background:#e3e3e3"></div>
<div class="a" style="left:249px;top:315px;width:1px;height:35px;background:#e3e3e3"></div>
<div class="a" style="left:349px;top:315px;width:1px;height:35px;background:#e3e3e3"></div>
<div class="t" style="left:10px;top:326.9px;font-size:12px;color:#707070">XGDW</div>
<div class="a" style="left:60px;top:315px;width:89px;height:35px;overflow:hidden"><div class="t" style="left:0;top:11.9px;font-size:12px;color:#666">北京皇纬智能科技</div></div>
<div class="t" style="left:260px;top:327.4px;font-size:12.7px;color:#666">010-124567896</div>
</div>
<div class="a" style="left:1277px;top:313px;width:17px;height:332px;background:#f0f0f0"></div>
<svg class="a" style="left:1281px;top:319px;" width="9" height="5" viewBox="0 0 9 5"><path d="M0 5 H9 L4.5 0 Z" fill="#a0a0a0"/></svg>
<div class="a" style="left:1279px;top:330px;width:13px;height:57px;background:#c1c1c1"></div>
<svg class="a" style="left:1281px;top:632px;" width="9" height="5" viewBox="0 0 9 5"><path d="M0 0 H9 L4.5 5 Z" fill="#505050"/></svg>
<div class="a" style="left:797px;top:645px;width:497px;height:30px;background:#f3f3f3;border-top:1px solid #e2e2e2"></div>
<svg class="a" style="left:802px;top:653px;" width="12" height="14" viewBox="0 0 12 14"><rect x="1" y="1" width="2" height="12" fill="#8fc3e6"/><path d="M11 1 V13 L4 7 Z" fill="#8fc3e6"/></svg>
<svg class="a" style="left:828px;top:653px;" width="9" height="14" viewBox="0 0 9 14"><path d="M8 1 V13 L1 7 Z" fill="#8fc3e6"/></svg>
<div class="a" style="left:845px;top:649px;width:1px;height:24px;background:#dcdcdc"></div>
<div class="t" style="left:853px;top:654.9px;font-size:13px;color:#333;">第</div>
<div class="a" style="left:868px;top:650px;width:29px;height:22px;background:#fff;border:1px solid #e4e4e4"></div>
<div class="t" style="left:873px;top:654.9px;font-size:13px;color:#333;">1</div>
<div class="t" style="left:900px;top:654.9px;font-size:13px;color:#333;">共21页</div>
<div class="a" style="left:946px;top:649px;width:1px;height:24px;background:#dcdcdc"></div>
<div class="a" style="left:949px;top:648px;width:26px;height:26px;border:1px solid #4a5a90;border-radius:3px;background:#f6f6f6"></div>
<svg class="a" style="left:949px;top:648px;" width="26" height="26" viewBox="0 0 26 26"><path d="M10 7 V19 L17 13 Z" fill="#1e88d8"/></svg>
<div class="a" style="left:975px;top:648px;width:26px;height:26px;border:1px solid #4a5a90;border-radius:3px;background:#f6f6f6"></div>
<svg class="a" style="left:975px;top:648px;" width="26" height="26" viewBox="0 0 26 26"><path d="M8 7 V19 L15 13 Z" fill="#1e88d8"/><rect x="16" y="7" width="2.2" height="12" fill="#1e88d8"/></svg>
<div class="a" style="left:1005px;top:648px;width:26px;height:26px;border:1px solid #4a5a90;border-radius:3px;background:#f6f6f6"></div>
<svg class="a" style="left:1005px;top:648px;" width="26" height="26" viewBox="0 0 26 26"><path d="M17.3 10.5 A5 5 0 1 1 13 8" fill="none" stroke="#1e88d8" stroke-width="2"/><path d="M12 5 L16 8 L12 10.5 Z" fill="#1e88d8"/></svg>
<div class="t" style="right:233px;top:655.1px;font-size:12.5px;color:#333;">显示1到50,共1022记录</div>
<div class="a" style="left:726px;top:247px;width:463px;height:29px;border:3px solid #e6393f"></div>
<div class="a" style="left:791px;top:284px;width:511px;height:399px;border:3px solid #e6393f"></div>
<svg class="a" style="left:745px;top:275px;" width="50" height="30" viewBox="0 0 50 30"><path d="M7.3 5.3 L30 14.5 L34 11.5 L44.5 25.5 L27.2 23.8 L28.5 19.8 Z" fill="#e33ae8"/></svg>
<div class="a" style="left:162px;top:872px;width:1358px;height:41px;background:#f3f3f3"></div>
<div class="tab" style="left:167px;width:78px;background:#2f4a9f;color:#fff;font-weight:bold">基本资料</div>
<div class="tab" style="left:253px;width:78px;">其他资料</div>
<div class="tab" style="left:339px;width:78px;">详细内容</div>
<div class="tab" style="left:425px;width:78px;">合同状态</div>
<div class="tab" style="left:511px;width:90px;">其他签约方</div>
<div class="tab" style="left:610px;width:77px;">结算计划</div>
<div class="tab" style="left:695px;width:102px;">合同材料清单</div>
<div class="tab" style="left:805px;width:78px;">合同附件</div>
<div class="tab" style="left:891px;width:78px;">协同办公</div>
<div class="a" style="left:1520px;top:0px;width:1px;height:915px;background:#b0b3ba"></div>
<div class="a" style="left:0px;top:0px;width:1px;height:915px;background:#b0b3ba"></div>
</body></html>
